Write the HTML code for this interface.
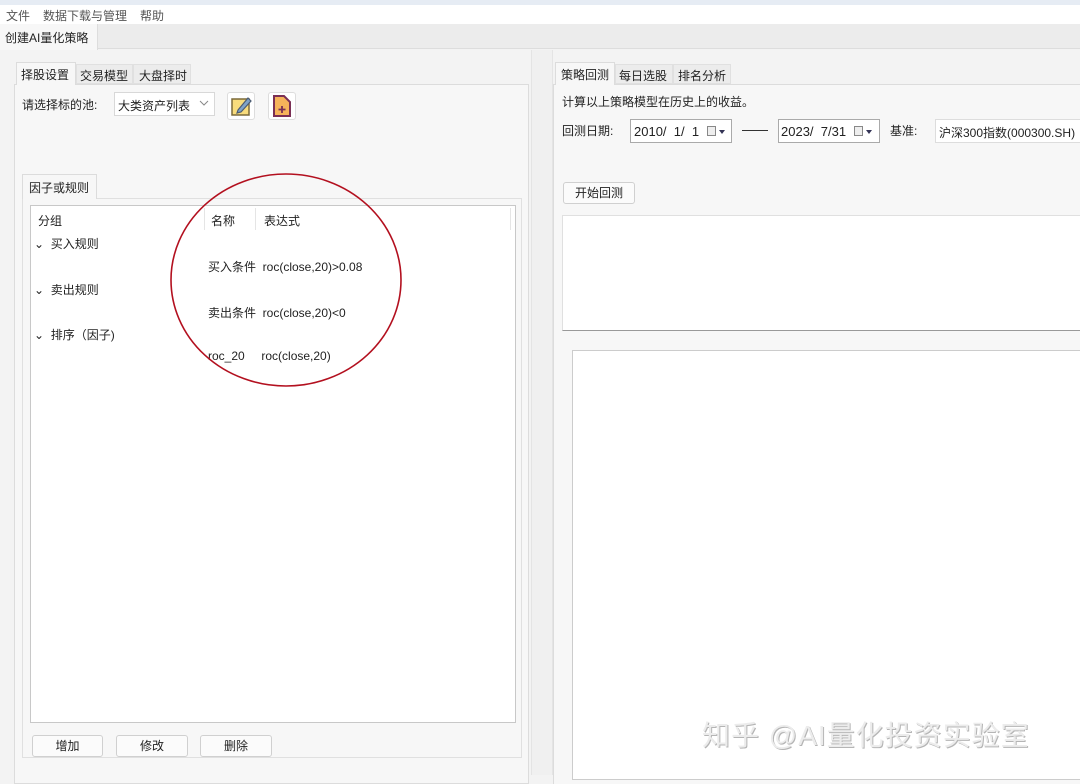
<!DOCTYPE html>
<html><head><meta charset="utf-8"><style>
*{margin:0;padding:0;box-sizing:border-box}
body{width:1080px;height:775px;overflow:hidden;background:#f3f3f3;font-family:"Liberation Sans","Microsoft YaHei","Noto Sans CJK SC",sans-serif;font-size:12px;color:#222;position:relative}
.a{position:absolute}
.t{position:absolute;white-space:nowrap}
.box{position:absolute;background:#fff;border:1px solid #c8c8c8}
.btn{position:absolute;background:#fbfbfb;border:1px solid #d0d0d0;border-radius:3px;text-align:center;line-height:20px;font-size:12px}
.cal{position:absolute;width:9px;height:10px;border:1px solid #888;background:#eee}
.arr{position:absolute;width:0;height:0;border-left:3px solid transparent;border-right:3px solid transparent;border-top:4px solid #335}
</style></head><body>
<div class="a" style="left:0;top:0;width:1080px;height:5px;background:#e6ecf4"></div>
<div class="a" style="left:0;top:5px;width:1080px;height:19px;background:#fff"></div>
<div class="t" style="left:6px;top:7px;color:#555">文件</div>
<div class="t" style="left:43px;top:7px;color:#555">数据下载与管理</div>
<div class="t" style="left:140px;top:7px;color:#555">帮助</div>
<div class="a" style="left:0;top:24px;width:1080px;height:25px;background:#ececec;border-bottom:1px solid #ddd"></div>
<div class="a" style="left:0;top:24px;width:98px;height:26px;background:#f7f7f7;border-right:1px solid #ddd"></div>
<div class="t" style="left:5px;top:29px">创建AI量化策略</div>

<!-- left panel -->
<div class="a" style="left:14px;top:84px;width:515px;height:700px;border:1px solid #dcdcdc;background:#f7f7f7"></div>
<div class="a" style="left:16px;top:62px;width:60px;height:23px;background:#f7f7f7;border:1px solid #dcdcdc;border-bottom:none"></div>
<div class="a" style="left:76px;top:64px;width:57px;height:20px;background:#ececec;border:1px solid #e0e0e0"></div>
<div class="a" style="left:133px;top:64px;width:58px;height:20px;background:#ececec;border:1px solid #e0e0e0"></div>
<div class="t" style="left:21px;top:66px">择股设置</div>
<div class="t" style="left:80px;top:67px">交易模型</div>
<div class="t" style="left:139px;top:67px">大盘择时</div>
<div class="t" style="left:22px;top:96px">请选择标的池:</div>
<div class="a" style="left:114px;top:92px;width:101px;height:24px;background:#fff;border:1px solid #d8d8d8"></div>
<div class="t" style="left:118px;top:97px">大类资产列表</div>
<svg class="a" style="left:199px;top:99px" width="10" height="8"><path d="M1 2 L5 6 L9 2" fill="none" stroke="#888" stroke-width="1"/></svg>
<div class="a" style="left:227px;top:92px;width:28px;height:28px;background:#fff;border:1px solid #ddd;border-radius:3px"></div>
<svg class="a" style="left:230px;top:95px" width="22" height="22"><rect x="2" y="4" width="17" height="16" fill="#f8dc7c" stroke="#7b6a3a" stroke-width="1.5"/><path d="M8 15 L18 3 L21 6 L11 17 L7 18 Z" fill="#7fa3c8" stroke="#4c5c72" stroke-width="1.2"/></svg>
<div class="a" style="left:268px;top:92px;width:28px;height:28px;background:#fff;border:1px solid #ddd;border-radius:3px"></div>
<svg class="a" style="left:271px;top:94px" width="22" height="24"><path d="M3 2 H13 L19 8 V22 H3 Z" fill="#f6b35a" stroke="#7a2f55" stroke-width="2"/><path d="M11 12 V19 M7.5 15.5 H14.5" stroke="#7a2f55" stroke-width="1.8"/></svg>

<div class="a" style="left:22px;top:198px;width:500px;height:560px;border:1px solid #e0e0e0;background:#f7f7f7"></div>
<div class="a" style="left:22px;top:174px;width:75px;height:25px;background:#f7f7f7;border:1px solid #dcdcdc;border-bottom:none"></div>
<div class="t" style="left:29px;top:179px">因子或规则</div>
<div class="box" style="left:30px;top:205px;width:486px;height:518px"></div>
<div class="a" style="left:204px;top:208px;width:1px;height:22px;background:#e5e5e5"></div>
<div class="a" style="left:255px;top:208px;width:1px;height:22px;background:#e5e5e5"></div>
<div class="a" style="left:510px;top:208px;width:1px;height:22px;background:#e5e5e5"></div>
<div class="t" style="left:38px;top:212px">分组</div>
<div class="t" style="left:211px;top:212px">名称</div>
<div class="t" style="left:264px;top:212px">表达式</div>
<div class="t" style="left:34px;top:235px">⌄&nbsp; 买入规则</div>
<div class="t" style="left:208px;top:258px">买入条件&nbsp; roc(close,20)&gt;0.08</div>
<div class="t" style="left:34px;top:281px">⌄&nbsp; 卖出规则</div>
<div class="t" style="left:208px;top:304px">卖出条件&nbsp; roc(close,20)&lt;0</div>
<div class="t" style="left:34px;top:326px">⌄&nbsp; 排序（因子)</div>
<div class="t" style="left:208px;top:349px">roc_20&nbsp;&nbsp;&nbsp;&nbsp; roc(close,20)</div>
<svg class="a" style="left:170px;top:173px" width="236" height="216"><ellipse cx="116" cy="107" rx="115" ry="106" fill="none" stroke="#b3101f" stroke-width="1.6"/></svg>
<div class="btn" style="left:32px;top:735px;width:71px">增加</div>
<div class="btn" style="left:116px;top:735px;width:72px">修改</div>
<div class="btn" style="left:200px;top:735px;width:72px">删除</div>

<!-- divider -->
<div class="a" style="left:531px;top:50px;width:22px;height:725px;background:#f0f0f0;border-left:1px solid #e4e4e4;border-right:1px solid #e4e4e4"></div>

<!-- right panel -->
<div class="a" style="left:553px;top:84px;width:530px;height:700px;border-top:1px solid #dcdcdc;border-left:1px solid #dcdcdc;background:#f7f7f7"></div>
<div class="a" style="left:555px;top:62px;width:60px;height:23px;background:#f7f7f7;border:1px solid #dcdcdc;border-bottom:none"></div>
<div class="a" style="left:615px;top:64px;width:58px;height:20px;background:#ececec;border:1px solid #e0e0e0"></div>
<div class="a" style="left:673px;top:64px;width:58px;height:20px;background:#ececec;border:1px solid #e0e0e0"></div>
<div class="t" style="left:561px;top:66px">策略回测</div>
<div class="t" style="left:619px;top:67px">每日选股</div>
<div class="t" style="left:678px;top:67px">排名分析</div>
<div class="t" style="left:562px;top:93px">计算以上策略模型在历史上的收益。</div>
<div class="t" style="left:562px;top:122px">回测日期:</div>
<div class="a" style="left:630px;top:119px;width:102px;height:24px;background:#fff;border:1px solid #aaa"></div>
<div class="t" style="left:634px;top:124px;font-size:13px">2010/&nbsp; 1/&nbsp; 1</div>
<div class="cal" style="left:707px;top:126px"></div><div class="arr" style="left:719px;top:130px"></div>
<div class="a" style="left:742px;top:130px;width:26px;height:1px;background:#333"></div>
<div class="a" style="left:778px;top:119px;width:102px;height:24px;background:#fff;border:1px solid #aaa"></div>
<div class="t" style="left:781px;top:124px;font-size:13px">2023/&nbsp; 7/31</div>
<div class="cal" style="left:854px;top:126px"></div><div class="arr" style="left:866px;top:130px"></div>
<div class="t" style="left:890px;top:122px">基准:</div>
<div class="a" style="left:935px;top:119px;width:150px;height:24px;background:#fff;border:1px solid #ddd"></div>
<div class="t" style="left:939px;top:124px;font-size:12px">沪深300指数(000300.SH)</div>
<div class="btn" style="left:563px;top:182px;width:72px">开始回测</div>
<div class="a" style="left:562px;top:215px;width:520px;height:116px;background:#fff;border:1px solid #e0e0e0;border-bottom:1px solid #999"></div>
<div class="a" style="left:572px;top:350px;width:510px;height:430px;background:#fff;border:1px solid #ccc"></div>
<div class="t" style="left:702px;top:714px;font-size:28px;letter-spacing:1px;color:#ececec;text-shadow:1px 1px 0 #b5b5b5">知乎 @AI量化投资实验室</div>
</body></html>
